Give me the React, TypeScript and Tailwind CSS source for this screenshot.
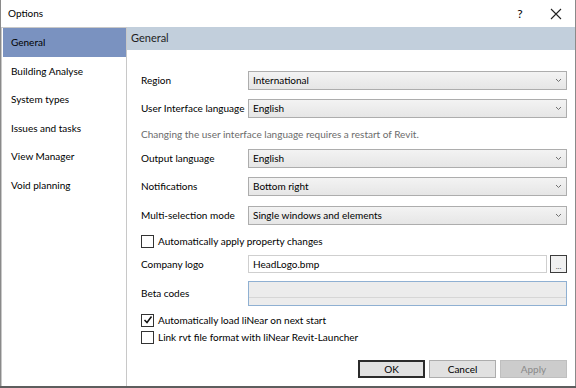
import React from "react";

const font = { fontFamily: 'Lato, "Noto Sans", sans-serif' };

const navItems = [
  "General",
  "Building Analyse",
  "System types",
  "Issues and tasks",
  "View Manager",
  "Void planning",
];

function Chevron() {
  return (
    <svg width="7" height="5" viewBox="0 0 7 5" className="shrink-0">
      <path d="M1 1 L3.5 3.5 L6 1" fill="none" stroke="#707070" strokeWidth="1" />
    </svg>
  );
}

function Select({ value }: { value: string }) {
  return (
    <div className="flex-1 h-[19px] flex items-center justify-between border border-[#adadad] bg-gradient-to-b from-[#f3f3f3] to-[#e6e6e6] pl-[4px] pr-[4px] text-[10px] text-black">
      <span>{value}</span>
      <Chevron />
    </div>
  );
}

function Checkbox({ checked, label }: { checked?: boolean; label: string }) {
  return (
    <div className="flex items-center gap-[4px] text-[10px] text-black whitespace-nowrap">
      <div className="w-[13px] h-[13px] border border-[#333] bg-white flex items-center justify-center">
        {checked && (
          <svg width="10" height="10" viewBox="0 0 10 10">
            <path d="M1.5 5 L4 7.5 L8.5 1.5" fill="none" stroke="#111" strokeWidth="1.5" />
          </svg>
        )}
      </div>
      <span>{label}</span>
    </div>
  );
}

function Row({ label, children, h }: { label: string; children: React.ReactNode; h: string }) {
  return (
    <div className={`flex items-center ${h}`}>
      <div className="w-[107px] shrink-0 text-[10px] text-black whitespace-nowrap">{label}</div>
      {children}
    </div>
  );
}

export default function App() {
  return (
    <div className="w-[576px] h-[388px] bg-white flex flex-col overflow-hidden" style={font}>
      <div className="flex-1 flex flex-col border-l border-r border-[#8a8a8a]">
        {/* Title bar */}
        <div className="h-[27px] flex items-center pl-[7px] text-[10px] text-black">
          <span className="flex-1">Options</span>
          <span className="w-[20px] text-center text-[12px] mr-[20px]">?</span>
          <svg width="12" height="12" viewBox="0 0 12 12" className="mr-[13px]">
            <path d="M1 1 L11 11 M11 1 L1 11" stroke="#222" strokeWidth="1.1" />
          </svg>
        </div>

        <div className="flex-1 flex">
          {/* Sidebar */}
          <div className="w-[126px] shrink-0 border-t border-l border-r border-[#c8c8c8] pl-[1px] flex flex-col">
            {navItems.map((item, i) => (
              <div
                key={item}
                className={`h-[28.5px] flex items-center pl-[8px] pt-[1px] text-[10px] text-black ${
                  i === 0 ? "bg-[#7a92c0]" : ""
                }`}
              >
                {item}
              </div>
            ))}
          </div>

          {/* Content */}
          <div className="flex-1 flex flex-col">
            <div className="h-[23px] bg-[#c2cfdc] flex items-center pl-[4px] text-[11px] text-[#1e1e1e]">
              General
            </div>
            <div className="flex-1 flex flex-col pl-[14px] pr-[8px] pt-[16px] pb-[8px]">
              <Row label="Region" h="h-[28px]">
                <Select value="International" />
              </Row>
              <Row label="User Interface language" h="h-[28px]">
                <Select value="English" />
              </Row>
              <div className="h-[24px] flex items-center text-[10px] text-[#6b6b6b] whitespace-nowrap">
                Changing the user interface language requires a restart of Revit.
              </div>
              <Row label="Output language" h="h-[24px]">
                <Select value="English" />
              </Row>
              <Row label="Notifications" h="h-[32px]">
                <Select value="Bottom right" />
              </Row>
              <Row label="Multi-selection mode" h="h-[26px]">
                <Select value="Single windows and elements" />
              </Row>
              <div className="h-[26px] flex items-center">
                <Checkbox label="Automatically apply property changes" />
              </div>
              <Row label="Company logo" h="h-[20px]">
                <div className="flex-1 h-[18px] border border-[#cfcfcf] bg-white flex items-center pl-[4px] text-[10px] text-black">
                  HeadLogo.bmp
                </div>
                <div className="w-[17px] h-[18px] ml-[3px] border border-[#3c3c3c] bg-[#f0f0f0] flex items-end justify-center text-[8px] leading-[12px] text-[#555]">
                  ...
                </div>
              </Row>
              <Row label="Beta codes" h="h-[39px]">
                <div className="flex-1 h-[25px] border border-[#8fb0d2] bg-[#ececec] flex flex-col">
                  <div className="h-[16px] border-b border-[#d6d6d6]" />
                </div>
              </Row>
              <div className="h-[14px] flex items-center">
                <Checkbox checked label="Automatically load liNear on next start" />
              </div>
              <div className="h-[20px] flex items-center">
                <Checkbox label="Link rvt file format with liNear Revit-Launcher" />
              </div>
              <div className="flex-1" />
              <div className="flex justify-end gap-[4px]">
                <div className="w-[67px] h-[18px] border-2 border-[#2b2b2b] bg-[#e1e1e1] flex items-center justify-center text-[10px] text-black">
                  OK
                </div>
                <div className="w-[67px] h-[18px] border border-[#adadad] bg-[#e1e1e1] flex items-center justify-center text-[10px] text-black">
                  Cancel
                </div>
                <div className="w-[67px] h-[18px] border border-[#bfbfbf] bg-[#cccccc] flex items-center justify-center text-[10px] text-[#8a8a8a]">
                  Apply
                </div>
              </div>
            </div>
          </div>
        </div>
      </div>
      <div className="h-[2px] bg-[#5e5e5e]" />
    </div>
  );
}
